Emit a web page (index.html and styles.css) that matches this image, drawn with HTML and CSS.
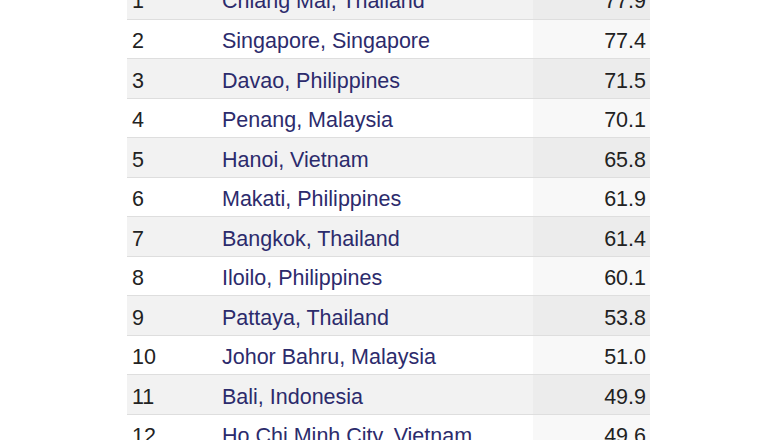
FILE: index.html
```html
<!DOCTYPE html>
<html lang="en">
<head>
  <meta charset="UTF-8" />
  <title>Ranking</title>
  <link rel="stylesheet" href="styles.css">
</head>
<body>
  <table class="ranking">
    <colgroup>
      <col class="col-rank">
      <col class="col-city">
      <col class="col-index">
    </colgroup>
    <tbody>
      <tr><td class="rank">1</td><td class="city">Chiang Mai, Thailand</td><td class="index">77.9</td></tr>
      <tr><td class="rank">2</td><td class="city">Singapore, Singapore</td><td class="index">77.4</td></tr>
      <tr><td class="rank">3</td><td class="city">Davao, Philippines</td><td class="index">71.5</td></tr>
      <tr><td class="rank">4</td><td class="city">Penang, Malaysia</td><td class="index">70.1</td></tr>
      <tr><td class="rank">5</td><td class="city">Hanoi, Vietnam</td><td class="index">65.8</td></tr>
      <tr><td class="rank">6</td><td class="city">Makati, Philippines</td><td class="index">61.9</td></tr>
      <tr><td class="rank">7</td><td class="city">Bangkok, Thailand</td><td class="index">61.4</td></tr>
      <tr><td class="rank">8</td><td class="city">Iloilo, Philippines</td><td class="index">60.1</td></tr>
      <tr><td class="rank">9</td><td class="city">Pattaya, Thailand</td><td class="index">53.8</td></tr>
      <tr><td class="rank">10</td><td class="city">Johor Bahru, Malaysia</td><td class="index">51.0</td></tr>
      <tr><td class="rank">11</td><td class="city">Bali, Indonesia</td><td class="index">49.9</td></tr>
      <tr><td class="rank">12</td><td class="city">Ho Chi Minh City, Vietnam</td><td class="index">49.6</td></tr>
    </tbody>
  </table>
</body>
</html>
```

FILE: styles.css
```css
body {
  margin: 0;
  background-color: #fff;
  font-family: "Liberation Sans", Arial, Helvetica, sans-serif;
  color: #222;
  overflow: hidden;
}

.ranking {
  width: 523px;
  margin: -20.5px 0 0 127px;
  border-collapse: collapse;
  table-layout: fixed;
  font-size: 21.5px;
}

.col-rank {
  width: 90px;
}

.col-index {
  width: 117px;
}

.ranking td {
  height: 39.5px;
  box-sizing: border-box;
  padding: 9.5px 5px 5px;
  line-height: 24px;
  border-bottom: 1px solid #dedede;
  white-space: nowrap;
  vertical-align: top;
}

.ranking tr:nth-child(odd) {
  background-color: #f2f2f2;
}

.ranking .city {
  color: #2c2b6c;
}

.ranking .index {
  text-align: right;
  padding-right: 4px;
  background-color: #f8f8f8;
}

.ranking tr:nth-child(odd) .index {
  background-color: #ececec;
}
```
